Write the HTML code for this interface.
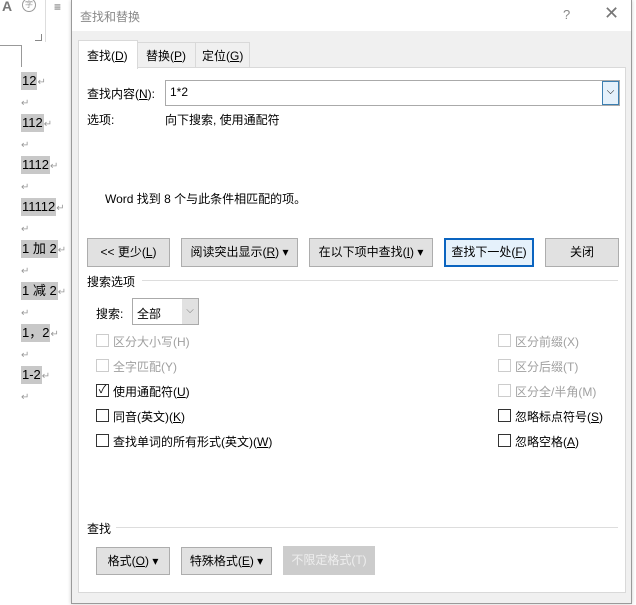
<html><head><style>
body{margin:0;width:636px;height:605px;position:relative;overflow:hidden;background:#fff;font-family:"Liberation Sans","Noto Sans CJK SC",sans-serif;font-size:12px;color:#000}
.a{position:absolute;white-space:nowrap}
.doc div{height:21px;line-height:21px;overflow:visible}
.hl{background:#c8c8c8;font-size:13px;padding:0 1px;line-height:18px;display:inline-block}
.r{color:#999;font-size:10px}
.btn{position:absolute;background:#e1e1e1;border:1px solid #adadad;box-sizing:border-box;text-align:center;font-size:12px}
.cb{position:absolute;width:11px;height:11px;border:1px solid #333;background:#fff}
.dis{border-color:#ccc}
.g{color:#a0a0a0}
u{text-decoration:underline}
</style></head><body>
<div class="a" style="left:2px;top:-2px;font-weight:bold;color:#777;font-size:14px">A</div>
<div class="a" style="left:22px;top:-2px;width:12px;height:12px;border:1px solid #999;border-radius:50%;font-size:8px;color:#999;text-align:center">字</div>
<div class="a" style="left:45px;top:0;width:1px;height:42px;background:#ddd"></div>
<div class="a" style="left:54px;top:0px;color:#666">≡</div>
<div class="a" style="left:35px;top:34px;width:6px;height:6px;border-right:1px solid #888;border-bottom:1px solid #888"></div>
<div class="a" style="left:0;top:45px;width:21px;height:1px;background:#999"></div>
<div class="a" style="left:21px;top:45px;width:1px;height:22px;background:#999"></div>
<div class="a doc" style="left:21px;top:72px">
<div><span class="hl">12</span><span class="r">↵</span></div>
<div class="r">↵</div>
<div><span class="hl">112</span><span class="r">↵</span></div>
<div class="r">↵</div>
<div><span class="hl">1112</span><span class="r">↵</span></div>
<div class="r">↵</div>
<div><span class="hl">11112</span><span class="r">↵</span></div>
<div class="r">↵</div>
<div><span class="hl">1 加 2</span><span class="r">↵</span></div>
<div class="r">↵</div>
<div><span class="hl">1 减 2</span><span class="r">↵</span></div>
<div class="r">↵</div>
<div><span class="hl">1，2</span><span class="r">↵</span></div>
<div class="r">↵</div>
<div><span class="hl">1-2</span><span class="r">↵</span></div>
<div class="r">↵</div>
</div>
<div class="a" style="left:71px;top:0;width:561px;height:604px;background:#f0f0f0;border:1px solid #9a9a9a;box-sizing:border-box;box-shadow:0 0 4px rgba(0,0,0,.2)"></div>
<div class="a" style="left:72px;top:0;width:559px;height:31px;background:#fff"></div>
<div class="a" style="left:80px;top:8px;color:#888;font-size:12px">查找和替换</div>
<div class="a" style="left:563px;top:7px;color:#888;font-size:13px">?</div>
<div class="a" style="left:604px;top:3px;color:#777;font-size:18px">✕</div>
<div class="a" style="left:78px;top:67px;width:548px;height:526px;background:#fff;border:1px solid #d9d9d9;box-sizing:border-box"></div>
<div class="a" style="left:137px;top:42px;width:113px;height:25px;border:1px solid #d9d9d9;border-bottom:none;box-sizing:border-box"></div>
<div class="a" style="left:195px;top:42px;width:1px;height:25px;background:#d9d9d9"></div>
<div class="a" style="left:78px;top:40px;width:60px;height:29px;background:#fff;border:1px solid #d9d9d9;border-bottom:none;box-sizing:border-box"></div>
<div class="a" style="left:87px;top:47px">查找(<u>D</u>)</div>
<div class="a" style="left:146px;top:47px">替换(<u>P</u>)</div>
<div class="a" style="left:202px;top:47px">定位(<u>G</u>)</div>
<div class="a" style="left:87px;top:85px">查找内容(<u>N</u>):</div>
<div class="a" style="left:165px;top:80px;width:455px;height:26px;border:1px solid #aaa;box-sizing:border-box"></div>
<div class="a" style="left:170px;top:85px">1*2</div>
<div class="a" style="left:602px;top:81px;width:17px;height:24px;border:1px solid #3c7fb1;background:#e5f1fb;box-sizing:border-box;text-align:center;font-size:10px;line-height:20px">⌵</div>
<div class="a" style="left:87px;top:111px">选项:</div>
<div class="a" style="left:165px;top:111px">向下搜索, 使用通配符</div>
<div class="a" style="left:105px;top:190px">Word 找到 8 个与此条件相匹配的项。</div>
<div class="btn" style="left:87px;top:238px;width:83px;height:29px;line-height:27px">&lt;&lt; 更少(<u>L</u>)</div>
<div class="btn" style="left:181px;top:238px;width:117px;height:29px;line-height:27px">阅读突出显示(<u>R</u>) ▾</div>
<div class="btn" style="left:309px;top:238px;width:124px;height:29px;line-height:27px">在以下项中查找(<u>I</u>) ▾</div>
<div class="btn" style="left:444px;top:238px;width:90px;height:29px;line-height:25px;border:2px solid #0a64c0;background:#e5f1fb">查找下一处(<u>F</u>)</div>
<div class="btn" style="left:545px;top:238px;width:74px;height:29px;line-height:27px">关闭</div>
<div class="a" style="left:87px;top:273px">搜索选项</div>
<div class="a" style="left:142px;top:280px;width:476px;height:1px;background:#ddd"></div>
<div class="a" style="left:96px;top:305px">搜索:</div>
<div class="a" style="left:132px;top:298px;width:67px;height:27px;border:1px solid #aaa;box-sizing:border-box"></div>
<div class="a" style="left:182px;top:299px;width:16px;height:25px;background:#e1e1e1;text-align:center;color:#777;font-size:10px;line-height:24px">⌵</div>
<div class="a" style="left:137px;top:305px">全部</div>
<div class="cb dis" style="left:96px;top:334px"></div><div class="a g" style="left:113px;top:333px">区分大小写(H)</div>
<div class="cb dis" style="left:96px;top:359px"></div><div class="a g" style="left:113px;top:358px">全字匹配(Y)</div>
<div class="cb" style="left:96px;top:384px;font-size:11px;line-height:11px;text-align:center">✓</div><div class="a" style="left:113px;top:383px">使用通配符(<u>U</u>)</div>
<div class="cb" style="left:96px;top:409px"></div><div class="a" style="left:113px;top:408px">同音(英文)(<u>K</u>)</div>
<div class="cb" style="left:96px;top:434px"></div><div class="a" style="left:113px;top:433px">查找单词的所有形式(英文)(<u>W</u>)</div>
<div class="cb dis" style="left:498px;top:334px"></div><div class="a g" style="left:515px;top:333px">区分前缀(X)</div>
<div class="cb dis" style="left:498px;top:359px"></div><div class="a g" style="left:515px;top:358px">区分后缀(T)</div>
<div class="cb dis" style="left:498px;top:384px"></div><div class="a g" style="left:515px;top:383px">区分全/半角(M)</div>
<div class="cb" style="left:498px;top:409px"></div><div class="a" style="left:515px;top:408px">忽略标点符号(<u>S</u>)</div>
<div class="cb" style="left:498px;top:434px"></div><div class="a" style="left:515px;top:433px">忽略空格(<u>A</u>)</div>
<div class="a" style="left:87px;top:520px">查找</div>
<div class="a" style="left:116px;top:527px;width:502px;height:1px;background:#ddd"></div>
<div class="btn" style="left:96px;top:547px;width:74px;height:28px;line-height:26px">格式(<u>O</u>) ▾</div>
<div class="btn" style="left:181px;top:547px;width:91px;height:28px;line-height:26px">特殊格式(<u>E</u>) ▾</div>
<div class="btn" style="left:283px;top:546px;width:92px;height:29px;line-height:27px;background:#ccc;border-color:#ccc;color:#eee">不限定格式(T)</div>
</body></html>
